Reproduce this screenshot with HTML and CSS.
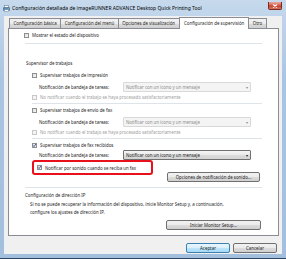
FILE: index.html
```html
<!DOCTYPE html>
<html lang="es">
<head>
  <meta charset="UTF-8">
  <title>Configuración detallada</title>
  <link rel="stylesheet" href="styles.css">
</head>
<body>

  <div class="window">
    <!-- barra de título -->
    <div class="titlebar">
      <svg class="app-icon" width="7" height="7" viewBox="0 0 7 7">
        <rect x="1.5" y="0.5" width="4" height="2.5" fill="#fff" stroke="#6d7f92" stroke-width="0.6"/>
        <rect x="0.3" y="2.6" width="6.4" height="3" rx="0.6" fill="#5b8fc3" stroke="#2f5b86" stroke-width="0.5"/>
        <rect x="1.5" y="4.6" width="4" height="2" fill="#fff" stroke="#6d7f92" stroke-width="0.5"/>
        <circle cx="5.6" cy="3.6" r="0.5" fill="#7fd04b"/>
      </svg>
      <span class="title">Configuración detallada de imageRUNNER ADVANCE Desktop Quick Printing Tool</span>
      <div class="close-btn">
        <svg width="6" height="4" viewBox="0 0 6 4"><path d="M1 0.5 L5 3.5 M5 0.5 L1 3.5" stroke="#fff" stroke-width="1.1"/></svg>
      </div>
    </div>

    <div class="client">
      <div class="tabs">
        <div class="tab">Configuración básica</div>
        <div class="tab">Configuración del menú</div>
        <div class="tab">Opciones de visualización</div>
        <div class="tab active">Configuración de supervisión</div>
        <div class="tab">Otro</div>
      </div>

      <div class="panel">
        <label class="check top-check"><span class="box"></span>Mostrar el estado del dispositivo</label>
        <div class="rule"></div>

        <div class="heading">Supervisor de trabajos</div>

        <div class="group">
          <label class="check first"><span class="box"></span>Supervisar trabajos de impresión</label>
          <div class="notif-row">
            <span>Notificación de bandeja de tareas:</span>
            <div class="combo disabled">Notificar con un icono y un mensaje<span class="arrow">▾</span></div>
          </div>
          <label class="check off"><span class="box"></span>No notificar cuando el trabajo se haya procesado satisfactoriamente</label>
          <div class="rule"></div>

          <label class="check"><span class="box"></span>Supervisar trabajos de envío de fax</label>
          <div class="notif-row">
            <span>Notificación de bandeja de tareas:</span>
            <div class="combo disabled">Notificar con un icono y un mensaje<span class="arrow">▾</span></div>
          </div>
          <label class="check off"><span class="box"></span>No notificar cuando el trabajo se haya procesado satisfactoriamente</label>
          <div class="rule"></div>

          <label class="check"><span class="box checked"><svg width="5" height="5" viewBox="0 0 5 5"><path d="M1 2.4 L2.1 3.6 L4 1" fill="none" stroke="#3b4f86" stroke-width="0.9"/></svg></span>Supervisar trabajos de fax recibidos</label>
          <div class="notif-row tight">
            <span>Notificación de bandeja de tareas:</span>
            <div class="combo">Notificar con un icono y un mensaje<span class="arrow">▾</span></div>
          </div>
          <div class="sound-row">
            <div class="highlight">
              <label class="check"><span class="box checked"><svg width="5" height="5" viewBox="0 0 5 5"><path d="M1 2.4 L2.1 3.6 L4 1" fill="none" stroke="#3b4f86" stroke-width="0.9"/></svg></span>Notificar por sonido cuando se reciba un fax</label>
            </div>
            <button class="btn sound-btn">Opciones de notificación de sonido...</button>
          </div>
        </div>

        <div class="rule ip-rule"></div>
        <div class="heading ip-heading">Configuración de dirección IP</div>
        <p class="ip-text">Si no se puede recuperar la información del dispositivo, inicie Monitor Setup y, a continuación,<br>configure los ajustes de dirección IP.</p>
        <button class="btn setup-btn">Iniciar Monitor Setup...</button>
      </div>

      <div class="actions">
        <button class="btn default">Aceptar</button>
        <button class="btn">Cancelar</button>
      </div>
    </div>
  </div>

</body>
</html>
```

FILE: styles.css
```css
* {
  box-sizing: border-box;
}

body {
  margin: 0;
  font-family: "Noto Sans", "DejaVu Sans", sans-serif;
  font-size: 4.4px;
  color: #1e1e1e;
}

.window {
  width: 286px;
  height: 259px;
  display: flex;
  flex-direction: column;
  padding: 0 4px 4px 4px;
  background: linear-gradient(#c6d9ed, #aac5e2 30%, #a2bfdd);
  border-bottom: 1px solid #2d4562;
}

/* barra de título */
.titlebar {
  height: 16px;
  display: flex;
  align-items: center;
  margin: 0 -4px;
  padding: 0 4px 0 3px;
}

.app-icon {
  flex: none;
  margin-top: 1px;
}

.title {
  margin-left: 2px;
  font-size: 5px;
  color: #000;
  white-space: nowrap;
  flex: 1;
}

.close-btn {
  align-self: flex-start;
  margin-top: 2px;
  width: 14px;
  height: 8px;
  display: flex;
  align-items: center;
  justify-content: center;
  border: 1px solid #7b2a22;
  border-top: none;
  border-radius: 0 0 2px 2px;
  background: linear-gradient(#e9a99e, #d56555 45%, #c2422f 55%, #d57561);
}

/* área cliente */
.client {
  flex: 1;
  display: flex;
  flex-direction: column;
  background: #f0f0f0;
  padding: 1px 3px 0 4px;
}

.tabs {
  display: flex;
  align-items: flex-end;
  height: 11px;
  padding-left: 1px;
  position: relative;
  z-index: 1;
}

.tab {
  height: 10px;
  line-height: 9px;
  padding: 0 3.5px;
  margin-right: -1px;
  white-space: nowrap;
  border: 1px solid #898c95;
  border-bottom: none;
  background: linear-gradient(#f2f2f2, #ebebeb 50%, #dddddd 50%, #cfcfcf);
}

.tab.active {
  height: 12px;
  margin-bottom: -1px;
  line-height: 10px;
  padding: 0 4px 0 4.5px;
  background: #fff;
  position: relative;
}

.panel {
  height: 208px;
  display: flex;
  flex-direction: column;
  background: #fff;
  border: 1px solid #898c95;
  padding: 0 16px 0 15px;
}

.check {
  display: flex;
  align-items: center;
  height: 8px;
  white-space: nowrap;
}

.box {
  flex: none;
  width: 5px;
  height: 5px;
  margin-right: 3px;
  border: 1px solid #8e8f8f;
  background: linear-gradient(135deg, #dcdcdc, #fbfbfb);
  display: flex;
}

.box svg {
  margin: -1px;
}

.check.off {
  color: #a0a0a0;
}

.check.off .box {
  border-color: #c8c8c8;
  background: #f4f4f4;
}

.top-check {
  margin-top: 2px;
}

.rule {
  height: 1px;
  margin-top: 2px;
  background: #dde3e8;
}

.top-check + .rule {
  margin-top: 4px;
  margin-left: 1px;
}

.heading {
  margin-top: 15px;
  height: 8px;
  line-height: 8px;
  padding-left: 2px;
}

.group {
  padding-left: 8px;
  display: flex;
  flex-direction: column;
}

.group .check {
  margin-top: 2px;
}

.group .check.first {
  margin-top: 4px;
}

.group .check.off {
  margin-top: 1px;
}

.notif-row {
  display: flex;
  align-items: center;
  height: 10px;
  margin-top: 3px;
  padding-left: 7px;
  padding-right: 11px;
  white-space: nowrap;
}

.notif-row.tight {
  margin-top: 1px;
}

.combo {
  margin-left: auto;
  width: 128px;
  height: 10px;
  display: flex;
  align-items: center;
  padding-left: 2px;
  border: 1px solid #707070;
  border-radius: 1px;
  background: linear-gradient(#f6f6f6, #e9e9e9 50%, #dcdcdc 50%, #d3d3d3);
}

.combo .arrow {
  margin-left: auto;
  margin-right: 2px;
  font-size: 4px;
}

.combo.disabled {
  color: #8d8d8d;
  border-color: #d9d9d9;
  background: #f4f4f4;
}

.sound-row {
  display: flex;
  height: 22px;
  padding-right: 2px;
}

.highlight {
  width: 121px;
  height: 15px;
  padding-left: 3px;
  display: flex;
  align-items: center;
  border: 2px solid #e8101b;
  border-radius: 3px;
}

.highlight .check {
  margin-top: 0;
}

.btn {
  font: inherit;
  color: #1e1e1e;
  padding: 0;
  height: 10px;
  border: 1px solid #707070;
  border-radius: 2px;
  background: linear-gradient(#f2f2f2, #ebebeb 45%, #dddddd 50%, #cfcfcf);
}

.sound-btn {
  margin-left: auto;
  align-self: flex-end;
  width: 93px;
}

.ip-rule {
  margin-top: 5px;
  margin-left: 1px;
}

.ip-heading {
  margin-top: 3px;
  padding-left: 1px;
}

.ip-text {
  margin: 1px 0 0;
  padding-left: 6px;
  line-height: 8px;
  white-space: nowrap;
}

.setup-btn {
  margin-top: 4px;
  margin-left: auto;
  margin-right: 1px;
  width: 95px;
}

.actions {
  display: flex;
  justify-content: flex-end;
  gap: 3px;
  margin-top: 7px;
  padding-right: 2px;
}

.actions .btn {
  width: 44px;
}

.btn.default {
  border-color: #3c7fb1;
  background: linear-gradient(#eaf6fd, #d9f0fc 45%, #bee6fd 50%, #a7d9f5);
}
```
